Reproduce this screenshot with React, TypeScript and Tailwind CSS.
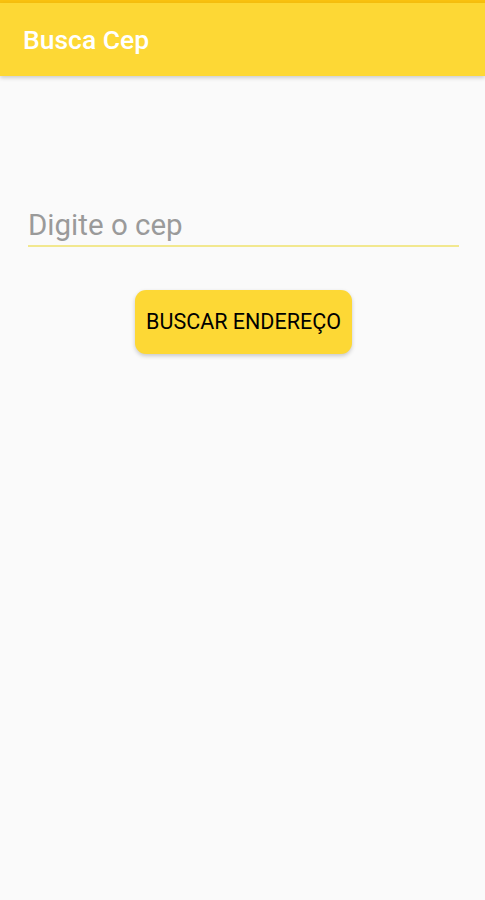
import React from "react";

export default function App() {
  return (
    <div className="w-[485px] h-[900px] bg-[#fafafa] flex flex-col" style={{ fontFamily: "Roboto, 'Liberation Sans', sans-serif" }}>
      <div className="h-[3px] bg-[#f9c10f]" />
      <div className="h-[73px] bg-[#fdd835] flex items-center pl-[23px] shadow-[0_2px_4px_rgba(0,0,0,0.18)]">
        <span className="text-white text-[26.5px] font-medium leading-none mt-[2px]">Busca Cep</span>
      </div>
      <div className="flex flex-col px-[28px] pt-[133px]">
        <div className="h-[38px] flex items-start border-b-2 border-[#f2e88f] w-[431px]">
          <span className="text-[29.5px] leading-[32px] text-[#9a9a9a]">Digite o cep</span>
        </div>
        <div className="flex justify-center mt-[43px] pl-[2px]">
          <button className="w-[217px] h-[64px] rounded-[11px] bg-[#fdd835] text-black text-[21.5px] shadow-[0_2px_4px_rgba(0,0,0,0.2)] flex items-center justify-center">
            BUSCAR ENDEREÇO
          </button>
        </div>
      </div>
    </div>
  );
}
